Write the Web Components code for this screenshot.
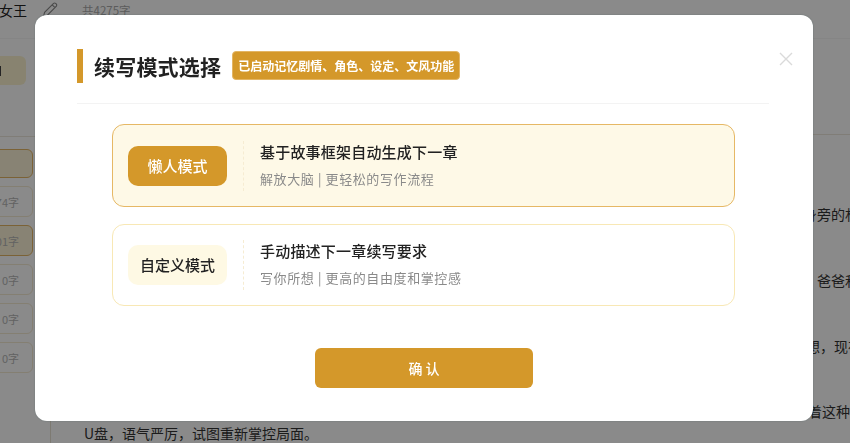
<!DOCTYPE html>
<html lang="zh">
<head>
<meta charset="utf-8">
<style>
  html, body { margin: 0; height: 100%; overflow: hidden; background: #fff; }
  body { font-family: "Noto Sans CJK SC", "Noto Sans", sans-serif; color: #222; }
</style>
</head>
<body>
<editor-page>
  <editor-top slot="top"></editor-top>
  <chapter-list slot="side">
    <chapter-item active first></chapter-item>
    <chapter-rule></chapter-rule>
    <chapter-item active short></chapter-item>
    <chapter-item>74字</chapter-item>
    <chapter-item active>01字</chapter-item>
    <chapter-item>0字</chapter-item>
    <chapter-item>0字</chapter-item>
    <chapter-item>0字</chapter-item>
  </chapter-list>
  <story-text slot="main"></story-text>
</editor-page>

<mode-dialog>
  <mode-card selected label="懒人模式" heading="基于故事框架自动生成下一章" sub="解放大脑 | 更轻松的写作流程"></mode-card>
  <mode-card label="自定义模式" heading="手动描述下一章续写要求" sub="写你所想 | 更高的自由度和掌控感"></mode-card>
</mode-dialog>

<script>
  function shadow(el, html) {
    el.attachShadow({ mode: 'open' }).innerHTML = html;
  }

  class EditorPage extends HTMLElement {
    connectedCallback() {
      shadow(this, `
        <style>
          :host { display: flex; flex-direction: column; height: 443px; overflow: hidden; }
          .body { flex: 1; display: flex; min-height: 0; }
          .side { flex: 0 0 51px; box-sizing: border-box; border-right: 1px solid #e8e2d2; overflow: hidden; }
          .main { flex: 1; min-width: 0; }
        </style>
        <slot name="top"></slot>
        <div class="body">
          <div class="side"><slot name="side"></slot></div>
          <div class="main"><slot name="main"></slot></div>
        </div>`);
    }
  }
  customElements.define('editor-page', EditorPage);

  class EditorTop extends HTMLElement {
    connectedCallback() {
      shadow(this, `
        <style>
          :host { display: flex; align-items: center; height: 39px; box-sizing: border-box; padding-bottom: 18px; border-bottom: 1px solid #f6f6f6; }
          .name { font-size: 14px; color: #222; margin-left: -1px; }
          svg { margin-left: 14px; display: block; }
          .count { margin-left: 23px; font-size: 11.5px; color: #aaa; }
        </style>
        <span class="name">女王</span>
        <svg width="18" height="18" viewBox="0 0 18 18" fill="none" stroke="#888" stroke-width="1.1">
          <path d="M2.5 15.5 L3.6 11.4 L12.6 2.4 Q13.6 1.5 14.6 2.4 L15.4 3.2 Q16.2 4.2 15.4 5.2 L6.4 14.2 Z M11.2 3.9 L14 6.6"/>
        </svg>
        <span class="count">共4275字</span>`);
    }
  }
  customElements.define('editor-top', EditorTop);

  class ChapterList extends HTMLElement {
    connectedCallback() {
      shadow(this, `
        <style>
          :host { display: flex; flex-direction: column; padding-top: 17px; margin-left: -20px; width: 70px; }
          ::slotted(chapter-item) { margin-bottom: 8px; }
          ::slotted(chapter-item[first]) { margin-bottom: 0; }
        </style>
        <slot></slot>`);
    }
  }
  customElements.define('chapter-list', ChapterList);

  class ChapterRule extends HTMLElement {
    connectedCallback() {
      shadow(this, `
        <style>
          :host { display: block; height: 1px; margin: 51px 0 12px; background: #ece8dc; }
        </style>`);
    }
  }
  customElements.define('chapter-rule', ChapterRule);

  class ChapterItem extends HTMLElement {
    connectedCallback() {
      const on = this.hasAttribute('active');
      const first = this.hasAttribute('first');
      const short = this.hasAttribute('short');
      shadow(this, `
        <style>
          :host { display: flex; align-items: center; justify-content: flex-end; box-sizing: border-box;
            height: ${first || short ? 29 : 31}px; width: ${first ? 46 : 53}px; padding-right: ${first ? 24 : 13}px; font-size: 11px; color: #b5b5b5;
            border: 1px solid ${first ? 'transparent' : on ? '#e3b564' : '#f4ead2'}; border-radius: 6px;
            background: ${first ? '#fbf3d0' : on ? '#fbf2d6' : 'transparent'}; }
          .cut { width: 2px; height: 10px; background: #444; }
        </style>
        ${first ? '<div class="cut"></div>' : '<slot></slot>'}`);
    }
  }
  customElements.define('chapter-item', ChapterItem);

  class StoryText extends HTMLElement {
    connectedCallback() {
      shadow(this, `
        <style>
          :host { display: block; font-size: 14px; line-height: 22px; color: #333; }
          .title { height: 96px; box-sizing: border-box; border-bottom: 1px solid #ece8dc; }
          .lines { padding-top: 68px; }
          p { margin: 0 0 44px; white-space: nowrap; }
          .tail { margin-bottom: 0; }
          .last { margin: 0; padding-left: 33px; }
        </style>
        <div class="title"></div>
        <div class="lines">
          <p style="padding-left:752px">身旁的杉树</p>
          <p style="padding-left:766px">爸爸和</p>
          <p style="padding-left:755px;margin-bottom:43px">想，现在</p>
          <p class="tail" style="padding-left:757px">着这种</p>
          <p class="last">U盘，语气严厉，试图重新掌控局面。</p>
        </div>`);
    }
  }
  customElements.define('story-text', StoryText);

  class ModeDialog extends HTMLElement {
    connectedCallback() {
      shadow(this, `
        <style>
          :host { position: fixed; inset: 0; display: flex; align-items: flex-start; justify-content: flex-start;
            background: rgba(0,0,0,.46); }
          .box { position: relative; box-sizing: border-box; margin: 15px 0 0 35px; width: 778px; height: 406px;
            background: #fff; border-radius: 12px; padding: 34px 42px 0; box-shadow: 0 0 2px rgba(50,80,80,.4); }
          .head { display: flex; align-items: center; height: 34px; padding-bottom: 20px; border-bottom: 1px solid #f3f3f3; margin-right: 2px; }
          .bar { width: 6px; height: 34px; background: #d4982a; margin-right: 11px; }
          h2 { margin: 0; font-size: 21px; line-height: 34px; font-weight: 700; color: #222; letter-spacing: .2px; }
          .tag { margin: 0 0 1px 11px; box-sizing: border-box; height: 29px; width: 228px; display: flex; align-items: center; justify-content: center;
            background: #d4982a; border: 1px solid #e3b564; border-radius: 4px; font-size: 12px; font-weight: 700; color: #fff; }
          .close { position: absolute; left: 744px; top: 37px; display: block; }
          .cards { display: flex; flex-direction: column; gap: 17px; margin: 20px 36px 0 35px; }
          button { display: block; width: 218px; height: 40px; margin: 42px 0 0 238px; padding: 0; border: 0; border-radius: 6px;
            background: #d4982a; color: #fff; font: 500 14px "Noto Sans CJK SC", sans-serif; }
        </style>
        <div class="box">
          <div class="head">
            <div class="bar"></div>
            <h2>续写模式选择</h2>
            <div class="tag">已启动记忆剧情、角色、设定、文风功能</div>
          </div>
          <svg class="close" width="14" height="14" viewBox="0 0 14 14" stroke="#dadada" stroke-width="1.4" fill="none">
            <path d="M1 1 L13 13 M13 1 L1 13"/>
          </svg>
          <div class="cards"><slot></slot></div>
          <button>确 认</button>
        </div>`);
    }
  }
  customElements.define('mode-dialog', ModeDialog);

  class ModeCard extends HTMLElement {
    connectedCallback() {
      const on = this.hasAttribute('selected');
      shadow(this, `
        <style>
          :host { display: flex; align-items: center; box-sizing: border-box; height: ${on ? 83 : 82}px;
            padding: 0 15px; border: 1px solid ${on ? '#e6b865' : '#f8e8b5'}; border-radius: 12px;
            background: ${on ? '#fef9e7' : '#fff'}; }
          .pill { flex: 0 0 99px; box-sizing: border-box; height: 40px; padding-bottom: 1px; display: flex; align-items: center; justify-content: center; border-radius: 10px;
            font-size: 15px; font-weight: 500; background: ${on ? '#d4982a' : '#fef9e4'}; color: ${on ? '#fff' : '#222'}; }
          .sep { height: 50px; margin: 0 16px; border-left: 1px dashed #f6ecd2; }
          .txt { padding-bottom: ${on ? 1 : 3}px; }
          .h { font-size: 15px; font-weight: 500; line-height: 22px; color: #222; letter-spacing: .2px; }
          .s { margin-top: 6px; font-size: 13px; line-height: 20px; color: #8a8a8a; letter-spacing: .6px; }
        </style>
        <div class="pill">${this.getAttribute('label')}</div>
        <div class="sep"></div>
        <div class="txt">
          <div class="h">${this.getAttribute('heading')}</div>
          <div class="s">${this.getAttribute('sub')}</div>
        </div>`);
    }
  }
  customElements.define('mode-card', ModeCard);
</script>
</body>
</html>
